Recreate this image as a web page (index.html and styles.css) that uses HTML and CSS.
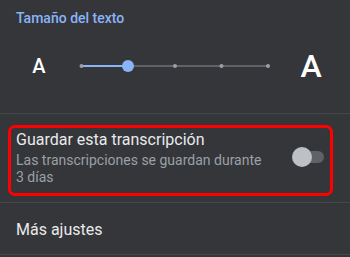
FILE: index.html
```html
<!DOCTYPE html>
<html lang="es">
<head>
<meta charset="utf-8">
<link rel="stylesheet" href="styles.css">
</head>
<body>
<div class="panel">
  <div class="section-title">Tamaño del texto</div>
  <div class="size-row">
    <div class="a-cell a-small">A</div>
    <svg class="slider" width="200" height="16" viewBox="0 0 200 16">
      <line x1="6" y1="8" x2="193" y2="8" stroke="#5f6368" stroke-width="2"/>
      <line x1="6" y1="8" x2="53" y2="8" stroke="#8ab4f8" stroke-width="2"/>
      <circle cx="6.5" cy="8" r="2" fill="#9aa0a6"/>
      <circle cx="100" cy="8" r="2" fill="#9aa0a6"/>
      <circle cx="146.5" cy="8" r="2" fill="#9aa0a6"/>
      <circle cx="193" cy="8" r="2" fill="#9aa0a6"/>
      <circle cx="53" cy="8" r="6" fill="#8ab4f8"/>
    </svg>
    <div class="a-cell a-big">A</div>
  </div>
  <div class="divider"></div>
  <div class="toggle-item">
    <div class="toggle-text">
      <div class="item-title">Guardar esta transcripción</div>
      <div class="item-sub">Las transcripciones se guardan durante<br>3 días</div>
    </div>
    <div class="switch"><span class="switch-thumb"></span></div>
    <div class="highlight"></div>
  </div>
  <div class="divider"></div>
  <div class="link-item">Más ajustes</div>
  <div class="divider"></div>
</div>
</body>
</html>
```

FILE: styles.css
```css
html, body {
  margin: 0;
  padding: 0;
  background: #35363a;
}
body {
  font-family: Roboto, "Noto Sans", sans-serif;
  color: #e8eaed;
  width: 350px;
  height: 257px;
  overflow: hidden;
}
.panel {
  display: flex;
  flex-direction: column;
}
.section-title {
  padding: 8px 16px 0;
  font-size: 14px;
  line-height: 20px;
  color: #8ab4f8;
  font-weight: 500;
}
.size-row {
  display: flex;
  align-items: center;
  height: 76px;
  padding: 0 0 9px 24px;
  gap: 21px;
}
.a-cell {
  width: 30px;
  text-align: center;
  color: #ffffff;
  line-height: 1;
}
.a-small {
  font-size: 20px;
  font-weight: 500;
}
.a-big {
  font-size: 32px;
  font-weight: 500;
}
.slider {
  display: block;
  flex: none;
}
.divider {
  height: 1px;
  background: #45464a;
}
.toggle-item {
  position: relative;
  display: flex;
  align-items: center;
  justify-content: space-between;
  padding: 14px 16px 16px 16px;
}
.item-title {
  font-size: 16px;
  line-height: 24px;
  color: #e8eaed;
}
.item-sub {
  font-size: 14px;
  line-height: 17px;
  color: #9aa0a6;
}
.switch {
  position: relative;
  width: 32px;
  height: 20px;
  margin-right: 10px;
}
.switch::before {
  content: "";
  position: absolute;
  left: 8px;
  right: 0;
  top: 4px;
  height: 12px;
  border-radius: 6px;
  background: #5f6368;
}
.switch-thumb {
  position: absolute;
  left: 0;
  top: 0;
  width: 20px;
  height: 20px;
  border-radius: 50%;
  background: #bdc1c6;
}
.highlight {
  position: absolute;
  left: 8px;
  top: 11px;
  width: 325px;
  height: 71px;
  box-sizing: border-box;
  border: 3px solid #ff0000;
  border-radius: 7px;
  pointer-events: none;
}
.link-item {
  padding: 15px 16px 12px;
  font-size: 16px;
  line-height: 24px;
  color: #e8eaed;
}
```
